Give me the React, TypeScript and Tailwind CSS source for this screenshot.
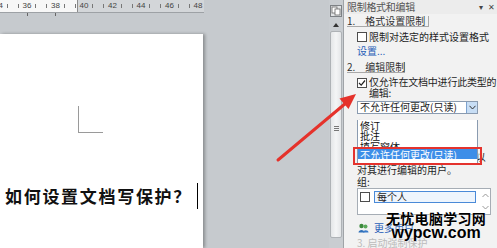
const rulerNums = ["34", "36", "38", "40", "42", "44", "46", "48"];

function Ruler() {
  return (
    <div className="w-[204px] h-[13px] overflow-hidden border-b border-[#9da1a5] bg-[linear-gradient(to_right,#f7f7f7_77px,#8c8c8c_77px,#8c8c8c_78px,#d3d6d9_78px)] flex items-center">
      <div className="ml-[-15.75px] flex items-center">
        {rulerNums.map((n) => (
          <div key={n} className="w-[28.5px] flex items-center justify-center gap-[4px] text-[8px] leading-[8px] text-[#444] font-['Liberation_Sans',sans-serif]">
            <span className="w-px h-[4px] bg-[#777]" />
            <span>{n}</span>
            <span className="w-px h-[4px] bg-[#777]" />
          </div>
        ))}
      </div>
    </div>
  );
}

function Checkbox({ checked = false }: { checked?: boolean }) {
  return (
    <div className="w-[10px] h-[10px] shrink-0 border border-[#4d4d4d] bg-white flex items-center justify-center">
      {checked && (
        <svg width="8" height="8" viewBox="0 0 8 8">
          <path d="M1 4 L3.2 6.2 L7 1.5" fill="none" stroke="#222" strokeWidth="1.2" />
        </svg>
      )}
    </div>
  );
}

function Scrollbar() {
  return (
    <div className="w-[14px] flex flex-col items-center bg-[#c9cdd1]">
      <div className="mt-[5px] w-[12px] h-[12px] border border-[#7d8185] bg-[#e2e4e6] flex items-center justify-center">
        <svg width="10" height="10" viewBox="0 0 10 10">
          <rect x="1" y="1" width="5" height="6" fill="#fff" stroke="#666" strokeWidth="0.8" />
          <rect x="4" y="3" width="5" height="6" fill="#fff" stroke="#666" strokeWidth="0.8" />
        </svg>
      </div>
      <div className="mt-[6px] w-0 h-0 border-l-[3px] border-r-[3px] border-b-[4px] border-l-transparent border-r-transparent border-b-[#333]" />
      <div className="mt-[4px] mb-[10px] w-[12px] flex-1 rounded-[2px] border border-[#aeb2b6] bg-[linear-gradient(to_right,#e4e6e8,#f4f5f6,#e4e6e8)] flex flex-col items-center justify-center gap-[1px] pb-[12px]">
        <span className="w-[5px] h-px bg-[#777]" />
        <span className="w-[5px] h-px bg-[#777]" />
        <span className="w-[5px] h-px bg-[#777]" />
      </div>
    </div>
  );
}

function Panel() {
  return (
    <div className="w-[154px] bg-[#f2f2f2] border-l border-[#9fa3a7] flex flex-col text-[10px] leading-[10px] text-[#1e1e1e]">
      <div className="h-[16px] pl-[3px] pr-[2px] flex items-center justify-between text-[#555] bg-[#ececec]">
        <span className="tracking-[-0.3px] whitespace-nowrap">限制格式和编辑</span>
        <span className="text-[8px] text-[#444] flex gap-[5px]">
          <span>▾</span>
          <span>✕</span>
        </span>
      </div>
      <div className="mt-[2px] ml-[3px] w-[82px] h-[12px] border-b border-r border-[#a8a8a8] flex items-center whitespace-nowrap">
        <span className="text-[#333]">1.</span>
        <span className="ml-[10px] text-[#333]">格式设置限制</span>
      </div>
      <div className="mt-[5px] ml-[13px] flex items-center gap-[2px]">
        <Checkbox />
        <span className="whitespace-nowrap">限制对选定的样式设置格式</span>
      </div>
      <div className="mt-[4px] ml-[13px] h-[11px] text-[#2a5fb8] flex items-center">设置...</div>
      <div className="mt-[6px] ml-[3px] w-[58px] h-[12px] border-b border-r border-[#a8a8a8] flex items-center whitespace-nowrap">
        <span className="text-[#333]">2.</span>
        <span className="ml-[10px] text-[#333]">编辑限制</span>
      </div>
      <div className="mt-[4px] ml-[13px] flex items-start gap-[2px]">
        <div className="mt-[1px]">
          <Checkbox checked />
        </div>
        <span className="whitespace-nowrap leading-[10.5px] tracking-[-0.2px]">
          仅允许在文档中进行此类型的
          <br />
          编辑:
        </span>
      </div>
      <div className="mt-[3px] ml-[13px] w-[121px] h-[14px] border border-[#8a9bb0] bg-white flex items-center">
        <span className="ml-[2px] flex-1 whitespace-nowrap">不允许任何更改(只读)</span>
        <div className="w-[11px] h-full bg-[#c8def5] border-l border-[#7da2ce] flex items-center justify-center">
          <svg width="7" height="5" viewBox="0 0 7 5">
            <path d="M0.5 0.8 L3.5 4 L6.5 0.8" fill="none" stroke="#333" strokeWidth="1" />
          </svg>
        </div>
      </div>
      <div className="mt-[6px] ml-[13px] text-[#333]">例外项(可选)</div>
      <div className="mt-[22px] ml-[13px] whitespace-nowrap tracking-[0.8px]">选择部分文档，并选择可以</div>
      <div className="mt-[3px] ml-[13px] whitespace-nowrap">对其进行编辑的用户。</div>
      <div className="mt-[2px] ml-[13px]">组:</div>
      <div className="mt-[1px] ml-[13px] w-[134px] h-[31px] border border-[#a6adb5] bg-white flex">
        <div className="flex-1 flex items-start pt-[3px] pl-[2px] gap-[4px]">
          <Checkbox />
          <div className="mt-[-1px] w-[102px] h-[12px] border border-[#4a8ad8] bg-[#eef5fd] flex items-center pl-[2px]">每个人</div>
        </div>
        <div className="w-[10px] flex flex-col items-center justify-between py-[4px] text-[#999]">
          <svg width="7" height="5" viewBox="0 0 7 5">
            <path d="M0.5 4 L3.5 1 L6.5 4" fill="none" stroke="#999" strokeWidth="1" />
          </svg>
          <svg width="7" height="5" viewBox="0 0 7 5">
            <path d="M0.5 1 L3.5 4 L6.5 1" fill="none" stroke="#999" strokeWidth="1" />
          </svg>
        </div>
      </div>
      <div className="mt-[8px] ml-[14px] flex items-center gap-[5px]">
        <svg width="11" height="10" viewBox="0 0 11 10">
          <circle cx="3.5" cy="3" r="2.2" fill="#3c8a3c" />
          <path d="M0.5 9.5 C0.5 6 6.5 6 6.5 9.5 Z" fill="#2f6fb8" />
          <circle cx="7.5" cy="3.5" r="2" fill="#5aa85a" />
          <path d="M5 9.5 C5 6.5 10.5 6.5 10.5 9.5 Z" fill="#3a7ac8" />
        </svg>
        <span className="text-[#2a5fb8] whitespace-nowrap">更多用户...</span>
      </div>
      <div className="mt-[5px] ml-[13px] text-[#bbb] whitespace-nowrap">3. 启动强制保护</div>
    </div>
  );
}

export default function App() {
  return (
    <div className="relative w-[497px] h-[248px] overflow-hidden bg-[#c6cace] flex font-['Noto_Sans_CJK_SC',sans-serif]">
      <div className="w-[329px] flex flex-col">
        <Ruler />
        <div className="h-[4px] w-[204px] relative">
          <div className="ml-[27px] w-px h-[3px] bg-[#666] inline-block align-top" />
          <div className="ml-[27px] w-px h-[3px] bg-[#666] inline-block align-top" />
        </div>
        <div className="mt-[17px] w-[203px] flex-1 bg-white shadow-[2px_0_3px_rgba(0,0,0,0.3)] flex flex-col">
          <div className="ml-[78px] mt-[72px] w-[25px] h-[27px] border-l border-b border-[#9a9a9a]" />
          <div className="mt-[50px] ml-[5px] flex items-center">
            <span className="text-[17px] leading-[24px] font-bold tracking-[1.7px] text-[#111] whitespace-nowrap">如何设置文档写保护？</span>
            <span className="ml-[5px] w-px h-[26px] bg-black" />
          </div>
        </div>
      </div>
      <Scrollbar />
      <Panel />

      {/* opened dropdown list */}
      <div className="absolute left-[357px] top-[120px] w-[121px] h-[44px] bg-white border border-[#8a9bb0] border-t-0 flex flex-col text-[10px] leading-[9px] text-[#111]">
        <div className="pl-[2px] pt-[1px]">修订</div>
        <div className="pl-[2px] mt-[1px]">批注</div>
        <div className="pl-[2px] mt-[2px]">填写窗体</div>
        <div className="mt-[-2px] h-[10px] bg-[#3d8ee8] text-white pl-[2px] flex items-center whitespace-nowrap">不允许任何更改(只读)</div>
      </div>
      {/* red highlight frame */}
      <div className="absolute left-[353px] top-[147px] w-[129px] h-[18px] border-2 border-[#e4332e]" />
      {/* red arrow */}
      <svg className="absolute left-0 top-0 pointer-events-none" width="497" height="248" viewBox="0 0 497 248">
        <line x1="278" y1="160" x2="346" y2="103" stroke="#e5322b" strokeWidth="3" strokeLinecap="round" />
        <polygon points="356,94 348.5,109 339.5,98.5" fill="#e5322b" />
      </svg>
      {/* watermark */}
      <div className="absolute left-[386px] top-[211px] flex flex-col items-center pointer-events-none">
        <span className="text-[14px] leading-[15px] font-bold text-black tracking-[0.3px] [text-shadow:0_0_2px_#fff]">无忧电脑学习网</span>
        <span className="text-[16px] leading-[13px] font-bold text-black font-['Liberation_Sans',sans-serif] [text-shadow:0_0_2px_#fff]">wypcw.com</span>
      </div>
    </div>
  );
}
